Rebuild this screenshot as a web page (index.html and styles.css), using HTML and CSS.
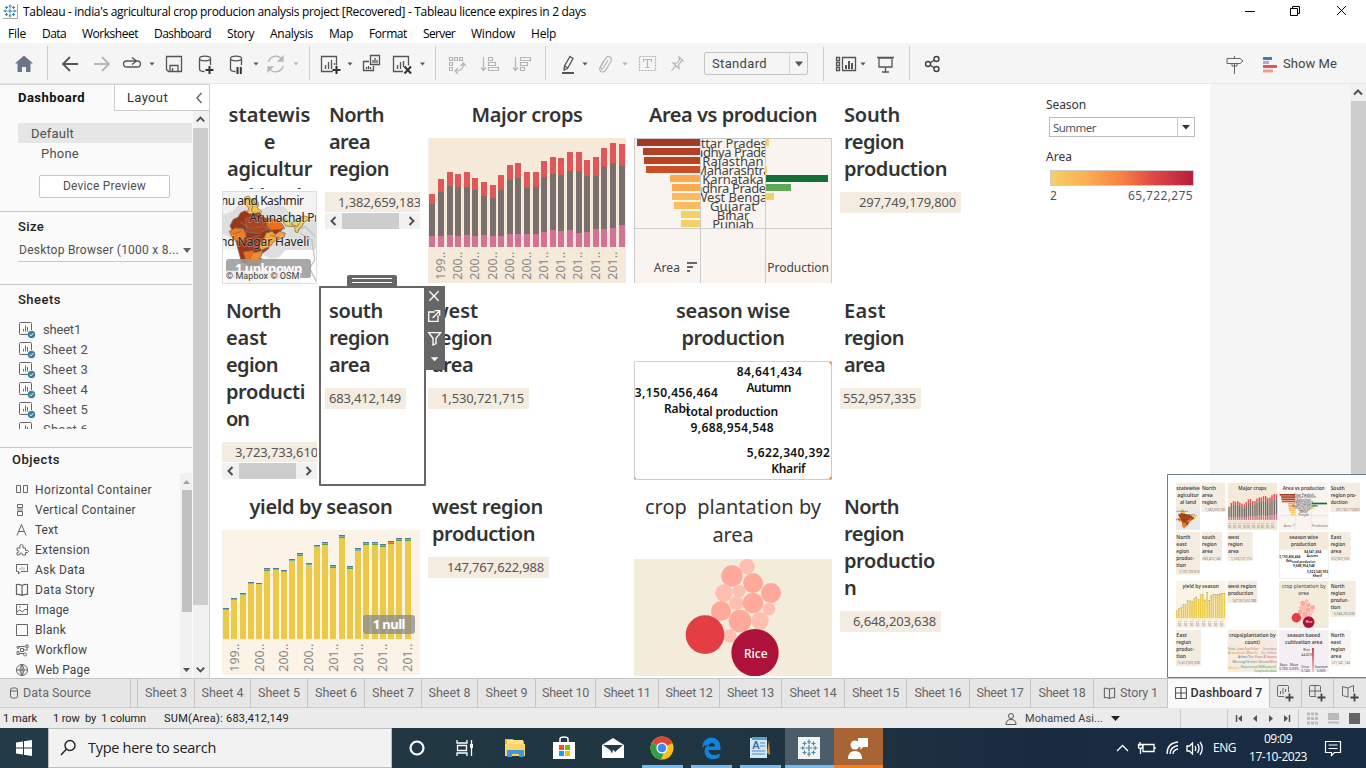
FILE: index.html
```html
<!DOCTYPE html>
<html lang="en">
<head>
<meta charset="utf-8">
<title>Tableau - Dashboard 7</title>
<link rel="stylesheet" href="styles.css">
</head>
<body>
<svg class="defs" width="0" height="0">
  <defs>
    <symbol id="flake" viewBox="0 0 16 16"><path d="M8 5v6M5 8h6M8 .5v4M6.500 2.500h3M8 11.500v4M6.500 13.500h3M.5 8h4M2.500 6.500v3M11.500 8h4M13.500 6.500v3M4 2.200v3.600M2.200 4h3.600M12 2.200v3.600M10.200 4h3.600M4 10.200v3.600M2.200 12h3.600M12 10.200v3.600M10.200 12h3.600" fill="none" stroke="currentColor" stroke-width="1.100"/></symbol>
    <symbol id="sheet" viewBox="0 0 17 17"><path d="M9 12.500H1.500q-1 0-1-1v-10q0-1 1-1h10q1 0 1 1V8M4.500 9.500V7M6.500 9.500V3.500M8.500 9.500V5" fill="none" stroke="#666"/><circle cx="12.500" cy="12.500" r="3.700" fill="#3a7fa3"/><path d="M10.800 12.500l1.300 1.300 2.200-2.600" fill="none" stroke="#fff"/></symbol>
    <symbol id="book" viewBox="0 0 14 14"><path d="M7 2.500Q4 .8 1.500 1.500v10Q4 11 7 12.500Q10 11 12.500 11.500v-10Q10 .8 7 2.500zM7 2.500v10" fill="none" stroke="#666" stroke-width="1.200"/></symbol>
    <symbol id="grid" viewBox="0 0 12 12"><path d="M1.500.5h9q1 0 1 1v9q0 1-1 1h-9q-1 0-1-1v-9q0-1 1-1zM6 .5v11M.5 6h11" fill="none" stroke="#555" stroke-width="1.200"/></symbol>
    <symbol id="chevL" viewBox="0 0 16 16"><path d="M10 4L6 8l4 4" fill="none" stroke="#505050" stroke-width="2"/></symbol>
    <symbol id="chevR" viewBox="0 0 16 16"><path d="M6 4l4 4-4 4" fill="none" stroke="#505050" stroke-width="2"/></symbol>
    <symbol id="chevU" viewBox="0 0 16 16"><path d="M4 10l4-4 4 4" fill="none" stroke="#505050" stroke-width="2"/></symbol>
    <symbol id="chevD" viewBox="0 0 16 16"><path d="M4 6l4 4 4-4" fill="none" stroke="#505050" stroke-width="2"/></symbol>
  </defs>
</svg>

<header class="titlebar">
  <svg class="app-icon" width="15" height="15"><use href="#flake"/></svg>
  <span data-w="563">Tableau - india's agricultural crop producion analysis project [Recovered] - Tableau licence expires in 2 days</span>
  <svg class="winctl" width="126" height="22" viewBox="1240 1 126 22"><path d="M1245 11.500h10M1290.500 8.500h7v7h-7zM1292.500 8V6.500h7v7h-2M1337 6l9 9M1346 6l-9 9" fill="none" stroke="#000"/></svg>
</header>
<nav class="menubar">
  <span data-w="18">File</span><span data-w="24">Data</span><span data-w="56">Worksheet</span><span data-w="57">Dashboard</span><span data-w="27">Story</span><span data-w="43">Analysis</span><span data-w="24">Map</span><span data-w="38">Format</span><span data-w="32">Server</span><span data-w="44">Window</span><span data-w="25">Help</span>
</nav>

<div class="toolbar">
  <svg class="sec" width="48" height="40" viewBox="0 43.500 48 40"><path d="M24 56l9 8h-2.500v8.500h-4.500v-5h-4v5h-4.500V64H15z" fill="#6b7785"/></svg>
  <svg class="sec" width="262" height="40" viewBox="48 43 262 40">
    <g fill="none" stroke="#555" stroke-width="1.300">
      <path d="M78 64H63M70 57l-7 7 7 7" stroke-width="1.800"/>
      <path d="M94 64h15M102 57l7 7-7 7" stroke="#b5b5b5" stroke-width="1.800"/>
      <path d="M134 61h-7q-3.500 0-3.500 3t3.500 3h10q3.500 0 3.500-3t-3.500-3h-3M132 57.500l4.500 3.500-4.500 3.500"/>
      <path d="M166.500 56.500h15v15h-13l-2-2zM170 71v-5.500h8V71M172.500 71v-3"/>
      <path d="M199.500 59v10q0 2.500 5 2.500M210.500 59v6"/><ellipse cx="205" cy="58.500" rx="5.500" ry="2.300"/>
      <path d="M209.500 66v8M205.500 70h8" stroke="#333" stroke-width="2"/>
      <path d="M230.500 59v10q0 2.500 5 2.500M241.500 59v6"/><ellipse cx="236" cy="58.500" rx="5.500" ry="2.300"/>
      <path d="M237.500 67v7M240.800 67v7" stroke="#333" stroke-width="2"/>
      <g stroke="#b5b5b5"><path d="M268.500 62a7.500 7.500 0 0 1 13.500-2.500M283 66a7.500 7.500 0 0 1-13.500 2.500"/><path d="M283 56.500v4.500h-4.500zM268 71.500v-4.500h4.500z" fill="#b5b5b5"/></g>
    </g>
    <path d="M149.500 62.500h5l-2.500 3zM253.500 62.500h5l-2.500 3z" fill="#555"/><path d="M293.500 62.500h5l-2.500 3z" fill="#b5b5b5"/>
  </svg>
  <svg class="sec" width="126" height="40" viewBox="310 43 126 40">
    <g fill="none" stroke="#555" stroke-width="1.300">
      <path d="M333 71.500h-11.500v-15h15v9M325.500 69v-4M328.500 69v-7M331.500 69v-9M334.500 65v-2"/>
      <path d="M336.500 66v8M332.500 70h8" stroke="#333" stroke-width="2"/>
      <path d="M370.500 55.500h9v9h-9zM373 63v-3M375 63v-5M377 63v-3M369 61.500h-5.500v9h10V66M366.500 69v-2M368.500 69v-3M370.500 69v-2"/>
      <path d="M403 71.500h-9.500v-15h15v9M397.500 69v-4M400.500 69v-7M403.500 67v-6"/>
      <path d="M404.500 66.500l6.500 7M411 66.500l-6.500 7" stroke="#333" stroke-width="2"/>
    </g>
    <path d="M347.500 62.500h5l-2.500 3zM420 62.500h5l-2.500 3z" fill="#555"/>
  </svg>
  <svg class="sec" width="110" height="40" viewBox="436 43 110 40">
    <g fill="none" stroke="#b5b5b5" stroke-width="1.200">
      <path d="M449.500 57.500h3v3h-3zM454.500 57.500h3v3h-3zM459.500 57.500h3v3h-3zM449.500 62.500h3v3h-3zM449.500 67.500h3v3h-3zM456 71q7 0 7.500-7M460.500 66l3-3 2.500 3M458 68l-3 3 3 3"/>
      <path d="M483.500 57v13M481 67.500l2.500 3 2.500-3M488.500 57.500h4v3h-4zM488.500 62.500h7v3h-7zM488.500 67.500h10v3h-10z"/>
      <path d="M515.500 57v13M513 67.500l2.500 3 2.500-3M520.500 57.500h10v3h-10zM520.500 62.500h7v3h-7zM520.500 67.500h4v3h-4z"/>
    </g>
  </svg>
  <svg width="158" height="40" viewBox="546 43 158 40">
    <g fill="none" stroke="#555" stroke-width="1.300"><path d="M570 56.500l3 2-5.500 10-3.500 1.500.5-4zM565 66l2.500 2" /><path d="M562 73h12" stroke-width="2"/></g>
    <g fill="none" stroke="#b5b5b5" stroke-width="1.200"><path d="M608 60l-4.500 8q-1.500 2-2.500.5-.5-1 .5-3l4-7q2-3 4.500-1.500 2.500 2 .5 5l-4.500 8q-2.500 3-5 1.500-2.500-2-.5-5l3-5.500"/><path d="M639.500 56.500h16v14h-16z" stroke-dasharray="2 1"/><path d="M643.500 62v-2.500h8V62M647.500 59.500v8M645.500 67.500h4"/><path d="M679 57l4 4-2 .5-2.500 3.500.5 3.500-6-5.500h4l2.500-3.500zM675.500 65.500l-4 5.500"/></g>
    <path d="M582.500 62.500h5l-2.500 3z" fill="#555"/><path d="M622.500 62.500h5l-2.500 3z" fill="#b5b5b5"/>
  </svg>
  <div class="combo"><span data-w="55">Standard</span><svg width="18" height="21"><path d="M5 8.500h8l-4 5z" fill="#555"/></svg></div>
  <svg class="sec after-combo" width="87" height="40" viewBox="823 43 87 40">
    <path d="M823.500 47v34" stroke="#ccc"/><path d="M836.500 57.500h3v3h-3zM836.500 62.500h3v3h-3zM836.500 67.500h3v3h-3zM842.500 57.500h13v13h-13zM879 58h13v9h-13zM877 57.500h17M885.500 67v5M882 72h7" fill="none" stroke="#555" stroke-width="1.300"/><path d="M846 69v-4M849 69v-8M852 69v-6" stroke="#555" stroke-width="2"/><path d="M860.500 62.500h5l-2.500 3z" fill="#555"/>
  </svg>
  <svg width="56" height="40" viewBox="910 43 56 40"><g fill="none" stroke="#444" stroke-width="1.400"><circle cx="928" cy="64" r="2.500"/><circle cx="936.500" cy="59" r="2.500"/><circle cx="936.500" cy="69" r="2.500"/><path d="M930 63l4.500-3M930 65l4.500 3"/></g></svg>
  <div class="showme">
    <svg width="54" height="40" viewBox="1226 43 54 40"><path d="M1227 57.500h13l3 2.500-3 2.500h-13zM1234.500 55v2M1234.500 63v10M1232 62.500v2.500h5v-2.500" fill="none" stroke="#666"/><path d="M1263 57.500h9" stroke="#4a78b5" stroke-width="3"/><path d="M1263 61.500h6" stroke="#bba3cf" stroke-width="3"/><path d="M1263 65.500h14" stroke="#e15759" stroke-width="3"/><path d="M1263 70h10" stroke="#f0a08a" stroke-width="3"/></svg>
    <span data-w="54">Show Me</span>
  </div>
</div>

<main class="work">
  <aside class="side">
    <div class="side-tabs"><b data-w="67">Dashboard</b><span class="lay"><span data-w="41">Layout</span><svg width="8" height="12"><path d="M6.500 1L2 6l4.500 5" fill="none" stroke="#666" stroke-width="1.400"/></svg></span></div>
    <div class="side-row">
      <div class="side-main">
        <section class="devices">
          <div class="default"><span data-w="43">Default</span></div>
          <div class="phone"><span data-w="38">Phone</span></div>
          <div class="preview"><span data-w="83">Device Preview</span></div>
        </section>
        <section class="size">
          <h3 data-w="26">Size</h3>
          <div class="size-pick"><span data-w="160">Desktop Browser (1000 x 8...</span><svg width="8" height="5"><path d="M0 0h8l-4 5z" fill="#666"/></svg></div>
        </section>
        <section class="sheets">
          <h3 data-w="43">Sheets</h3>
          <ul id="sheet-list"></ul>
        </section>
        <section class="objects">
          <h3 data-w="48">Objects</h3>
          <div class="obj-row">
            <ul>
              <li><svg width="14" height="14"><path d="M1.500 2.500h4v7h-4zM8.500 2.500h4v7h-4z"/></svg><span data-w="117">Horizontal Container</span></li>
              <li><svg width="14" height="14"><path d="M2.500 1.500h5v3h-5zM2.500 8.500h5v4h-5z"/><path d="M2 5h6v3H2z" fill="#bbb" stroke="none"/></svg><span data-w="101">Vertical Container</span></li>
              <li><svg width="14" height="14"><path d="M2 12.500L6.500 1.500 11 12.500M3.800 8.500h5.500"/></svg><span data-w="23">Text</span></li>
              <li><svg width="14" height="14"><path d="M2 5h3q-1-3.500 1.500-3.500T8 5h2.500v2.500q3-.5 3 1t-3 1V12h-3q0-2-1.500-2t-1.500 2H2V9.500q2 0 2-1t-2-1z"/></svg><span data-w="55">Extension</span></li>
              <li><svg width="14" height="14"><path d="M1.500 1.500h11v7H6L3.500 11V8.500h-2z"/><path d="M5 7V5M7 7V3.500M9 7V4.500" stroke="#aaa"/></svg><span data-w="50">Ask Data</span></li>
              <li><svg width="14" height="14"><use href="#book"/></svg><span data-w="60">Data Story</span></li>
              <li><svg width="14" height="14"><path d="M1.500 1.500h11v10h-11zM2 9l2.500-2 3 2 2-2.500h2.500M4 4h1.500"/></svg><span data-w="34">Image</span></li>
              <li><svg width="14" height="14"><path d="M1.500 1.500h11v11h-11z"/></svg><span data-w="31">Blank</span></li>
              <li><svg width="14" height="14"><path d="M4 3.500h6M4 10.500h5M3 3.500a1 1 0 1 0 .1 0M11 2h2v3h-2zM5.500 5.500h3v3h-3zM2 8.500h2v3H2zM10 10a1.500 1.500 0 1 0 .1 0M9 7h4"/></svg><span data-w="52">Workflow</span></li>
              <li><svg width="14" height="14"><circle cx="7" cy="7" r="5.500"/><path d="M1.500 7h11M7 1.500v11M7 1.500q-4 5.500 0 11M7 1.500q4 5.500 0 11"/></svg><span data-w="55">Web Page</span></li>
            </ul>
            <div class="mini-scroll"><svg width="12" height="17"><path d="M3 11l3.500-4 3.500 4z" fill="#a3a3a3"/></svg><i></i><svg class="dn" width="12" height="17"><path d="M3 7h7l-3.500 4z" fill="#505050"/></svg></div>
          </div>
        </section>
      </div>
      <div class="vscroll"><svg width="15" height="17"><use href="#chevU"/></svg><i></i><svg class="dn" width="15" height="17"><use href="#chevD"/></svg></div>
    </div>
  </aside>

  <div class="stage">
    <div class="board">
      <article class="tile"><h2 class="c clip"><span data-w="82">statewis</span><br>e<br><span data-w="85">agicultur</span><br>al land</h2>
        <svg class="map" width="95" height="93" viewBox="30 303 285 279">
          <path fill="#f3f3f3" d="M30 303h285v279H30z"/><path d="M30 375l30-10 20-20 60 15 60-20 70 50 45-5v90l-50 20-90 10L30 430z" fill="#dedede"/><path d="M30 480h60l30 60h50l50-60h95v102H30z" fill="#fff"/>
          <path d="M265 430l35 20 8 60-15 25 20 40M260 420l20-10 30 30" fill="none" stroke="#c4c4c4" stroke-width="4"/>
          <g stroke="#7d7466" stroke-width="2.500" stroke-linejoin="round">
            <path d="M98 322l12-4 10 12 10-6 10 16-4 14 12 10-4 14-26 6-12-16 4-14-14-14z" fill="#f6c04f"/>
            <path d="M112 340l10 8-4 14 12 10M124 328l4 16 12 4" fill="none"/>
            <path d="M64 388l14-6 8-14 14-6 12 10 30-4 18 16 16 2 16 12 16 8 4 12-26 20-10 8-6 30-16 12-24 6-18 30-24-8-6-24-8-30-8-30-12-24z" fill="#9d3619"/>
            <path d="M100 385l30-5 24 14 20 4-6 20-30 12-34-4z" fill="#ad421c"/>
            <path d="M52 424l18-10 24 2 8 16-4 14-16 8-14-4-10-12z" fill="#f07c22"/>
            <path d="M168 384l30 6 14 14 6 12-40 4-14-12z" fill="#ef6e1d"/>
            <path d="M94 486l30-4 8 18 18 6-10 18-14 18-14-12-10-18z" fill="#ef6e1d"/>
            <path d="M138 470l14-14 10-26 18-6 10 10 14-10 16 6-4 12-30 12-10 14-26 12z" fill="#f8a335"/>
            <path d="M120 490l32-8-4 16-22 24-14-10z" fill="#f58a2c"/>
            <path d="M206 386l18 4 16 10 12-10 22-12 12 2 4 8-14 8-6 14-8 4-4 14-8-2-2-16-26-2z" fill="#f2cc5c"/>
            <path d="M84 396l30 20 36-6M95 450l50-14M150 380l4 30 26 14M110 470l40-14M236 402l20 8 8-14M176 436l26 6M64 432l24-8" fill="none"/>
          </g>
          <g class="map-lbl"><text x="-6" y="346" textLength="282">nmu and Kashmir</text><text x="112" y="396" textLength="210">Arunachal Pr</text><text x="4" y="469" textLength="288">and Nagar Haveli</text></g>
          <rect x="42" y="507" width="255" height="57" rx="9" fill="#999" opacity=".85"/><text x="69" y="548" textLength="202" class="unk">1 unknown</text>
          <path d="M40 542h225v40H40z" fill="#f7f7f7" opacity=".85"/><text x="42" y="566" textLength="220" class="osm">© Mapbox © OSM</text>
          <path d="M31.500 304.500h282v276h-282z" fill="none" stroke="#ddd" stroke-width="3"/>
        </svg></article>
      <article class="tile"><h2><span data-w="55">North</span><br><span data-w="41">area</span><br><span data-w="60">region</span></h2><div class="val clipped"><span data-w="83">1,382,659,183</span></div><div class="hscroll"><svg width="17" height="16"><use href="#chevL"/></svg><i></i><svg width="17" height="16"><use href="#chevR"/></svg></div></article>
      <article class="tile w2"><h2 class="c"><span data-w="111">Major crops</span></h2><svg id="crops" width="198" height="145" viewBox="12 144 594 435"></svg></article>
      <article class="tile w2"><h2 class="c"><span data-w="168">Area vs producion</span></h2><svg id="avp" width="198" height="145" viewBox="12 144 594 435"></svg></article>
      <article class="tile w2"><h2><span data-w="56">South</span><br><span data-w="60">region</span><br><span data-w="103">production</span></h2><div class="val" style="width:121px"><span data-w="97">297,749,179,800</span></div></article>

      <article class="tile"><h2><span data-w="55">North</span><br><span data-w="41">east</span><br><span data-w="52">egion</span><br><span data-w="79">producti</span><br><span data-w="23">on</span></h2><div class="val clipped"><span data-w="83">3,723,733,610</span></div><div class="hscroll"><svg width="17" height="16"><use href="#chevL"/></svg><i></i><svg width="17" height="16"><use href="#chevR"/></svg></div></article>
      <article class="tile"><h2><span data-w="54">south</span><br><span data-w="60">region</span><br><span data-w="41">area</span></h2><div class="val" style="width:81px"><span data-w="72">683,412,149</span></div></article>
      <article class="tile w2"><h2><span data-w="46">west</span><br><span data-w="60">region</span><br><span data-w="41">area</span></h2><div class="val" style="width:101px"><span data-w="83">1,530,721,715</span></div></article>
      <article class="tile w2"><h2 class="c"><span data-w="114">season wise</span><br><span data-w="103">production</span></h2>
        <svg width="198" height="119" viewBox="12 33 594 357"><path d="M13.500 34.500h591v354h-591z" fill="#fff" stroke="#ccc" stroke-width="3"/><path d="M596 36h9v9zM605 377v10h-10z" fill="#f28e2b"/><path d="M13 33h592" stroke="#f2dfc0" stroke-width="2"/><path d="M14 379l5 8h-5z" fill="#76b7b2"/>
          <g class="season"><text x="418" y="78" textLength="195">84,641,434</text><text x="417" y="126" textLength="135">Autumn</text><text x="139" y="141" textLength="249">3,150,456,464</text><text x="140" y="190" textLength="76">Rabi</text><text x="306" y="198" textLength="277">total production</text><text x="306" y="246" textLength="249">9,688,954,548</text><text x="475" y="321" textLength="249">5,622,340,392</text><text x="475" y="369" textLength="103">Kharif</text></g></svg></article>
      <article class="tile w2"><h2><span data-w="42">East</span><br><span data-w="60">region</span><br><span data-w="41">area</span></h2><div class="val" style="width:81px"><span data-w="73">552,957,335</span></div></article>

      <article class="tile w2"><h2 class="c"><span data-w="143">yield by season</span></h2><svg id="yield" width="198" height="145" viewBox="30 120 594 435"></svg></article>
      <article class="tile w2"><h2><span data-w="111">west region</span><br><span data-w="103">production</span></h2><div class="val" style="width:121px"><span data-w="97">147,767,622,988</span></div></article>
      <article class="tile w2"><h2 class="c reg"><span data-w="176">crop&nbsp; plantation by</span><br><span data-w="41">area</span></h2>
        <svg id="bubbles" width="198" height="117" viewBox="12 627 594 351"></svg></article>
      <article class="tile w2"><h2><span data-w="55">North</span><br><span data-w="60">region</span><br><span data-w="91">productio</span><br><span data-w="12">n</span></h2><div class="val" style="width:101px"><span data-w="83">6,648,203,638</span></div></article>

      <div class="legend">
        <label data-w="40">Season</label>
        <div class="season-pick"><span data-w="43">Summer</span><svg width="17" height="18"><path d="M4 7h8l-4 4.500z" fill="#333"/></svg></div>
        <label class="a" data-w="26">Area</label>
        <div class="ramp"></div>
        <div class="ends"><span>2</span><span data-w="65">65,722,275</span></div>
      </div>

      <div class="pick">
        <svg class="grip" width="50" height="12"><path d="M2 0h46q2 0 2 2v10H0V2q0-2 2-2z" fill="#666"/><path d="M5 3.500h40M5 7.500h40" stroke="#fff"/></svg>
        <svg class="tools" width="21" height="84" viewBox="636 48 63 252"><path d="M636 48h63v252h-63z" fill="#666"/><path d="M652 64l28 28M680 64l-28 28M668 126h-18v28h28v-18M662 144l20-20M668 122h15v15M650 188h36l-14 17v16l-9 4v-20z" fill="none" stroke="#fff" stroke-width="4"/><path d="M656 262h23l-11 12z" fill="#fff"/></svg>
      </div>
    </div>
    <div class="beyond"></div>
    <div class="vscroll page"><svg width="16" height="17"><use href="#chevU"/></svg><i></i></div>
    <svg id="mini" class="mini" width="199" height="204" viewBox="21 12 597 612"></svg>
  </div>
</main>

<div class="tabs" id="tabs"></div>

<footer class="status">
  <span class="s1" data-w="34">1 mark</span><span class="s2" data-w="93">1 row&nbsp; by&nbsp; 1 column</span><span class="s3" data-w="125">SUM(Area): 683,412,149</span>
  <svg class="user" width="14" height="14"><circle cx="7" cy="4" r="2.500" fill="none" stroke="#555"/><path d="M2 12.500q0-5 5-5t5 5z" fill="none" stroke="#555"/></svg><span class="uname" data-w="78">Mohamed Asi...</span>
  <svg class="nav" width="256" height="20" viewBox="1110 708 256 20"><path d="M1111 715h9l-4.500 5z" fill="#222"/><path d="M1180.500 708v20M1227.500 708v20M1298.500 708v20" stroke="#ccc"/><path d="M1236.500 714v7M1289.500 714v7" stroke="#555" stroke-width="1.500"/><path d="M1242 714v7l-4-3.500zM1257 714v7l-4-3.500zM1269 714v7l4-3.500zM1284 714v7l4-3.500z" fill="#555"/><path d="M1307 713h11M1307 717.500h11M1307 722h11" stroke="#bbb" stroke-width="3" stroke-dasharray="3 1"/><path d="M1328 712h11v7h-11zM1328 720.500h11v2h-11z" fill="#bbb"/><path d="M1349 712h11v11h-11z" fill="#666"/></svg>
</footer>

<div class="taskbar">
  <div class="start"><svg width="16" height="16"><path d="M0 2.500l7-1V7.500H0zM8 1.300L16 0v7.500H8zM0 8.500h7v6l-7-1zM8 8.500h8V16l-8-1.200z" fill="#fff"/></svg></div>
  <div class="search"><svg width="18" height="18"><circle cx="11" cy="6.500" r="5" fill="none" stroke="#222" stroke-width="1.400"/><path d="M7.500 10L2 16" stroke="#222" stroke-width="1.400"/></svg><span data-w="128">Type here to search</span></div>
  <div class="app"><svg width="24" height="24"><circle cx="12" cy="12" r="6.500" fill="none" stroke="#fff" stroke-width="2.200"/></svg></div>
  <div class="app"><svg width="24" height="24"><path d="M3 4v3h10V4M3 20v-3h10v3M3.500 9.500h9v5h-9zM17.500 4v16" fill="none" stroke="#fff" stroke-width="1.300"/><path d="M16 8h3v4h-3z" fill="#fff"/></svg></div>
  <div class="app"><svg width="24" height="24"><path d="M2 3h8l1.500 2H21v15H2z" fill="#f0b93a"/><path d="M4 4h16v5H4z" fill="#ffe08a"/><path d="M2 8h20v12H2z" fill="#fcd462"/><path d="M4 21v-7h17v7h-5v-3H9v3z" fill="#3f98dc"/></svg></div>
  <div class="app"><svg width="24" height="24"><path d="M1 6h22v17H1z" fill="#fff"/><path d="M8 6V3q0-2 4-2t4 2v3" fill="none" stroke="#fff" stroke-width="1.500"/><path d="M7 9h5v5H7z" fill="#f25022"/><path d="M13 9h5v5h-5z" fill="#7fba00"/><path d="M7 15h5v5H7z" fill="#00a4ef"/><path d="M13 15h5v5h-5z" fill="#ffb900"/></svg></div>
  <div class="app"><svg width="24" height="24"><path d="M1 9L12 2l11 7v13H1z" fill="#fff"/><path d="M2 9h20l-8 7-2-2.500-1 4-2-3.500z" fill="#233b48"/></svg></div>
  <div class="app run"><svg width="24" height="24"><circle cx="12" cy="12" r="11.500" fill="#fbc116"/><path d="M12 12L2 6.500A11.500 11.500 0 0 1 22.500 7z" fill="#df4535"/><path d="M2 6.200A11.500 11.500 0 0 0 11 23.500L14.500 15z" fill="#2da04f"/><circle cx="12" cy="12" r="5.600" fill="#fff"/><circle cx="12" cy="12" r="4.300" fill="#4285f4"/></svg></div>
  <div class="app run"><svg width="24" height="24"><path d="M3 12Q4 1.500 12.500 1.500 21 2 21.500 11v3H9.500q.5 5 6 5 3 0 5-1.500v4q-3 2-7 1.800Q5.500 22.500 5.500 15q.5-5 4.500-6.500-5 .5-7 3.500zM9.500 10.500H16q-.3-3.500-3-3.500-3 .2-3.500 3.500z" fill="#1283dc" fill-rule="evenodd"/></svg></div>
  <div class="app run"><svg width="24" height="24"><path d="M2 2h17v20H2z" fill="#cfe8f8"/><path d="M4 1h15v3H4z" fill="#5b9fd0"/><text x="4" y="13" font-size="11" font-weight="700" fill="#3978aa" font-family="Liberation Sans">A</text><path d="M12 7h5M12 10h5M4 15h13M4 18h13" stroke="#5c87a5"/><path d="M21 4l1 15-3-2" fill="#e08b38"/></svg></div>
  <div class="app run on"><svg width="24" height="24"><path d="M1 1h22v22H1z" fill="#f2f2f2"/><use href="#flake" x="3" y="3" width="18" height="18" color="#4e87a8"/></svg></div>
  <div class="app warn"><svg width="24" height="24"><circle cx="9" cy="9" r="4.500" fill="#fff"/><path d="M2 23q0-8 7-8t7 8z" fill="#fff"/><path d="M12 2h10v9h-5l-2.500 3v-3H12z" fill="#fff"/></svg></div>
  <svg class="tray" width="90" height="24" viewBox="1114 736 90 24"><g fill="none" stroke="#fff" stroke-width="1.300"><path d="M1117 751l5.500-5.500 5.500 5.500M1143 744.500h11v7h-11zM1155 747v2M1140 742v4M1138.500 744.500h4v3q-2 2-4 0zM1140.500 749v5"/><path d="M1167 754q0-11 11-12M1170 754q0-7 8-8.500M1173 754q0-4 5-5" /><path d="M1187 746h2.500l3-3v11l-3-3h-2.500zM1195 746q1.500 2.500 0 5M1197.500 744q3 4 0 9M1200 742q4.500 6 0 13"/></g></svg>
  <span class="lang" data-w="23">ENG</span>
  <div class="clock"><span data-w="28">09:09</span><span data-w="58">17-10-2023</span></div>
  <svg class="note" width="20" height="20"><path d="M2.500 3.500h15v11h-6l-3 3v-3h-6zM5.500 7h9M5.500 10.500h9" fill="none" stroke="#fff" stroke-width="1.200"/></svg>
</div>
<script src="app.js"></script>
</body>
</html>
```

FILE: styles.css
```css
* { box-sizing: border-box; }
body { margin: 0; width: 1366px; height: 768px; overflow: hidden; display: flex; flex-direction: column; background: #fff; font: 12px/16px "Open Sans", sans-serif; color: #000; }
h2, h3, ul { margin: 0; padding: 0; list-style: none; }
svg { display: block; flex: none; }
span, h3, b, label { white-space: nowrap; }
.defs { position: absolute; }

.titlebar { height: 23px; display: flex; align-items: center; padding-left: 3px; }
.app-icon { color: #2d7fae; border-right: 1px solid #aaa; border-bottom: 1px solid #aaa; margin-right: 5px; }
.winctl { margin-left: auto; }
.menubar { height: 20px; display: flex; align-items: center; gap: 16px; padding: 2px 0 0 8px; }

.toolbar { height: 41px; background: #f5f5f5; border-bottom: 1px solid #e6e6e6; display: flex; align-items: center; font: 13px/18px Roboto, sans-serif; color: #444; }
.sec { background: linear-gradient(#ccc, #ccc) right 3px / 1px 34px no-repeat; }
.combo { width: 104px; height: 23px; margin-top: 1px; border: 1px solid #c4c4c4; border-radius: 2px; display: flex; justify-content: space-between; align-items: center; padding-left: 7px; }
.combo svg { border-left: 1px solid #d4d4d4; }
.after-combo { margin-left: 15px; }
.showme { margin-left: auto; display: flex; align-items: center; gap: 3px; padding: 1px 29px 0 0; }

.work { height: 594px; display: flex; }
.side { width: 210px; background: #fafafa; border-right: 1px solid #d0d0d0; display: flex; flex-direction: column; font-family: Roboto, sans-serif; color: #505050; }
.side-tabs { height: 27px; display: flex; font-size: 13px; line-height: 26px; border-top: 1px solid #d4d4d4; }
.side-tabs b { color: #111; padding-left: 18px; width: 114px; font-weight: 700; }
.lay { flex: 1; border-left: 1px solid #ccc; border-bottom: 1px solid #ccc; background: #fff; padding: 0 6px 0 12px; display: flex; justify-content: space-between; align-items: center; line-height: 25px; color: #333; }
.side-row { flex: 1; min-height: 0; display: flex; }
.side-main { width: 193px; padding-right: 1px; display: flex; flex-direction: column; }
.vscroll { width: 16px; background: #f1f1f1; display: flex; flex-direction: column; }
.vscroll i { height: 477px; background: #cdcdcd; }
.side .vscroll i { width: 15px; }
.dn { margin-top: auto; }
.devices { height: 101px; padding: 12px 0 0 18px; border-bottom: 1px solid #c8c8c8; font-size: 13px; line-height: 21px; }
.default { background: #e6e6e6; height: 20px; padding-left: 13px; }
.phone { padding-left: 23px; height: 20px; }
.preview { margin: 12px 22px 0 21px; height: 23px; border: 1px solid #c6c6c6; border-radius: 2px; background: #fff; text-align: center; font-size: 12px; line-height: 21px; }
.side h3 { font-size: 13px; line-height: 18px; font-weight: 500; color: #222; align-self: flex-start; width: max-content; }
.size { height: 73px; padding: 6px 0 0 18px; border-bottom: 1px solid #c8c8c8; }
.size-pick { border-bottom: 1px solid #c8c8c8; height: 24px; margin-top: 2px; padding: 1px 1px 0; display: flex; align-items: center; justify-content: space-between; }
.sheets { height: 163px; padding: 6px 0 0 18px; border-bottom: 1px solid #c8c8c8; }
.sheets ul { margin-top: 10px; height: 110px; overflow: hidden; font-size: 13px; }
.sheets li { height: 20px; display: flex; align-items: center; gap: 7px; padding: 2px 0 0 1px; }
.objects { flex: 1; min-height: 0; padding: 3px 0 0 12px; }
.obj-row { display: flex; justify-content: space-between; margin-top: 4px; height: 205px; overflow: hidden; }
.obj-row ul { padding-top: 7px; font-size: 12px; color: #444; }
.obj-row li { height: 20px; display: flex; align-items: center; gap: 6px; padding-left: 3px; }
.obj-row li svg { fill: none; stroke: #666; }
.mini-scroll { width: 12px; background: #f1f1f1; display: flex; flex-direction: column; }
.mini-scroll i { height: 122px; margin-left: 2px; background: #c1c1c1; }

.stage { flex: 1; position: relative; display: flex; overflow: hidden; }
.board { width: 1000px; position: relative; padding: 8px 0 0 8px; display: grid; grid-template-columns: repeat(10, 103px); grid-auto-rows: 196px; font-family: "Noto Sans", sans-serif; }
.beyond { width: 140px; background: #f5f5f5; }
.page { background: #f1f1f1; }
.page i { margin-left: 1px; height: 560px; }
.tile { padding: 4px; display: flex; flex-direction: column; min-width: 0; overflow: hidden; }
.w2 { grid-column-end: span 2; }
.tile:nth-child(5) { grid-column: 7 / span 2; }
.tile:nth-child(6), .tile:nth-child(11) { grid-column-start: 1; }
.tile h2 { margin: 5px 0 10px; padding-left: 4px; font-size: 20px; line-height: 27px; font-weight: 600; color: #333; white-space: nowrap; }
.tile h2.c { text-align: center; padding: 0; }
.tile h2.reg { font-weight: 400; line-height: 28px; }
.tile h2.clip { height: 88px; overflow: hidden; margin-bottom: 2px; flex: none; }
.val { height: 21px; background: #f5ece1; font-size: 13px; line-height: 21px; color: #555; text-align: right; padding-right: 5px; flex: none; }
.val.clipped { height: 20px; text-align: left; padding: 0 0 0 13px; overflow: hidden; }
.hscroll { display: flex; height: 16px; background: #f1f1f1; margin-top: 1px; flex: none; }
.hscroll i { width: 57px; background: #cdcdcd; }
.hscroll svg:last-child { margin-left: auto; }
.map-lbl { font-size: 36px; fill: #222; stroke: #fff; stroke-width: 4px; stroke-opacity: .35; paint-order: stroke; }
.unk { font-size: 39px; font-weight: 700; fill: #fff; }
.osm { font: 27px Roboto, sans-serif; fill: #444; }
.season { font: 600 36px "Noto Sans", sans-serif; text-anchor: middle; fill: #111; }
.axis { font: 37px "Noto Sans", sans-serif; fill: #888; }
.state { font: 39px "Noto Sans", sans-serif; fill: #444; text-anchor: middle; }
.head { font: 36px "Noto Sans", sans-serif; fill: #444; }

.legend { position: absolute; left: 836px; top: 12px; width: 150px; color: #333; font-size: 12px; display: flex; flex-direction: column; align-items: flex-start; line-height: 17px; }
.season-pick { margin: 4px 0 0 3px; width: 146px; height: 20px; border: 1px solid #bbb; display: flex; align-items: center; justify-content: space-between; padding-left: 3px; color: #555; font-size: 11.500px; }
.season-pick svg { border-left: 1px solid #ccc; }
.legend .a { margin-top: 11px; }
.ramp { margin: 5px 0 0 4px; width: 144px; height: 16px; background: linear-gradient(90deg, #f4d166, #fcae51 25%, #f98043 50%, #e04747 72%, #b71d3e); border: 1px solid #ccc; }
.ends { margin: 1px 0 0 4px; width: 143px; display: flex; justify-content: space-between; color: #555; }

.pick { position: absolute; left: 109px; top: 202px; width: 107px; height: 200px; border: 2px solid #666; border-radius: 1px; }
.grip { position: absolute; left: 26px; top: -13px; }
.tools { position: absolute; left: 103px; top: -2px; }
.mini { position: absolute; right: 0; bottom: 0; background: #fff; }
.mini text { font: 600 17.500px "Noto Sans", sans-serif; fill: #444; }
.mini .num { font-size: 10.500px; font-weight: 400; fill: #777; }
.mini .m { text-anchor: middle; }

.tabs { height: 30px; background: #e6e6e6; border-top: 1px solid #c4c4c4; display: flex; font: 12.500px/28px Roboto, sans-serif; color: #666; }
.tab { border-right: 1px solid #c4c4c4; border-bottom: 1px solid #cfcfcf; display: flex; align-items: center; justify-content: center; gap: 4px; flex: none; }
.tab.active { background: #fafafa; color: #333; font-weight: 500; border-bottom-color: #fafafa; }

.status { height: 20px; background: #ebebeb; display: flex; align-items: center; font: 11px/18px Roboto, sans-serif; color: #222; padding: 1px 0 0 3px; }
.s2 { margin-left: 16px; }
.s3 { margin-left: 18px; }
.user { margin-left: 715px; }
.uname { margin-left: 7px; color: #444; }
.nav { margin-left: auto; }

.taskbar { height: 40px; background: linear-gradient(90deg, #223b46, #1f3440 60%, #1a2b40 75%, #182c44); display: flex; align-items: center; color: #fff; }
.start { width: 48px; padding-left: 16px; }
.search { width: 344px; height: 40px; background: #f2f2f2; border: 1px solid #b9bdbf; display: flex; align-items: center; padding-left: 10px; gap: 11px; color: #222; font-size: 14.500px; }
.app { width: 49.100px; height: 40px; display: flex; align-items: center; justify-content: center; border-bottom: 3px solid transparent; border-top: 3px solid transparent; }
.run { border-bottom: 0; background: linear-gradient(#76b9ed, #76b9ed) center bottom / 41px 3px no-repeat; padding-bottom: 3px; }
.run.on { background-color: #4c5d69; background-size: 100% 3px; }
.warn { background: #a86432; border-top-color: #a86432; border-bottom-color: #f28022; }
.tray { margin-left: auto; }
.lang { margin-left: 9px; }
.clock { margin-left: 12px; width: 60px; display: flex; flex-direction: column; align-items: center; line-height: 18px; }
.note { margin: 0 23px 0 15px; }
```

FILE: app.js
```js
const $ = (id) => document.getElementById(id);
const rect = (x, y, w, h, f) => `<rect x="${x}" y="${y}" width="${w}" height="${h}" fill="${f}"/>`;

// Sheets list
$('sheet-list').innerHTML = ['sheet1', 'Sheet 2', 'Sheet 3', 'Sheet 4', 'Sheet 5', 'Sheet 6']
  .map((n, i) => `<li><svg width="17" height="17"><use href="#sheet"/></svg><span data-w="${i ? 45 : 38}">${n}</span></li>`).join('');

// Bottom tabs
const names = ['Sheet 3', 'Sheet 4', 'Sheet 5', 'Sheet 6', 'Sheet 7', 'Sheet 8', 'Sheet 9', 'Sheet 10', 'Sheet 11', 'Sheet 12', 'Sheet 13', 'Sheet 14', 'Sheet 15', 'Sheet 16', 'Sheet 17', 'Sheet 18'];
const edges = [138, 195, 251, 308, 365, 422, 478, 536, 596, 659, 720, 782, 845, 907, 970, 1031, 1094];
const add = (icon) => `<svg width="19" height="18" viewBox="0 0 19 18" fill="none" stroke="#666">${icon}<path d="M13.500 9.500v8M9.500 13.500h8" stroke="#444" stroke-width="1.800"/></svg>`;
$('tabs').innerHTML =
  `<div class="tab" style="width:131px;justify-content:flex-start;padding-left:9px"><svg width="10" height="12" fill="none" stroke="#666"><rect x="1.500" y="1" width="7" height="10" rx="2"/><path d="M2 4h6"/></svg><span data-w="68">Data Source</span></div><div class="tab" style="width:7px"></div>` +
  names.map((n, i) => `<div class="tab" style="width:${edges[i + 1] - edges[i]}px"><span data-w="${n.length > 7 ? 47 : 42}">${n}</span></div>`).join('') +
  `<div class="tab" style="width:74px"><svg width="13" height="13"><use href="#book"/></svg><span data-w="38">Story 1</span></div>` +
  `<div class="tab active" style="width:102px"><svg width="12" height="12"><use href="#grid"/></svg><span data-w="72">Dashboard 7</span></div>` +
  `<div class="tab" style="width:32px">${add('<path d="M8 12.500H2.500q-1 0-1-1v-9q0-1 1-1h9q1 0 1 1V8M4.500 10V7M7 10V4M9.500 8V5"/>')}</div>` +
  `<div class="tab" style="width:32px">${add('<path d="M8 12.500H2.500q-1 0-1-1v-9q0-1 1-1h9q1 0 1 1V8M7 1.500v11M1.500 7H12"/>')}</div>` +
  `<div class="tab" style="width:33px">${add('<path d="M8 12.500L6.500 13 1.500 11.500v-9L7 4l5.500-2.500V8M7 4v8.500"/>')}</div>`;

// Major crops: stacked bars
const cx = [15, 42, 69, 93, 120, 144, 171, 198, 222, 249, 273, 300, 327, 351, 378, 402, 429, 456, 480, 507, 531, 558, 585];
const red = [312, 267, 246, 252, 246, 264, 276, 285, 255, 225, 219, 246, 246, 213, 201, 204, 186, 186, 210, 201, 174, 159, 162];
const gray = [342, 306, 288, 291, 291, 300, 318, 324, 300, 270, 264, 294, 291, 261, 252, 255, 243, 243, 258, 258, 231, 219, 228];
const pink = [438, 438, 435, 438, 435, 438, 435, 438, 438, 432, 432, 432, 432, 426, 420, 423, 420, 429, 426, 417, 417, 414, 405];
const axis = (xs, y) => xs.map(([x, t]) => `<text class="axis" transform="translate(${x + 13} ${y}) rotate(-90)" textLength="84">${t}</text>`).join('');
const cropBars = cx.map((x, i) => rect(x, red[i], 18, gray[i] - red[i], '#e15759') + rect(x, gray[i], 18, pink[i] - gray[i], '#79706e') + rect(x, pink[i], 18, 471 - pink[i], '#d37295')).join('');
$('crops').innerHTML = rect(12, 144, 594, 435, '#f5ead9') + rect(12, 144, 3, 327, '#f0f0f0') + rect(12, 471, 594, 3, '#f0f0f0') +
  cropBars + cx.filter((_, i) => i % 2 === 0).map((x) => rect(x - 3, 474, 3, 9, '#eee')).join('') +
  axis([[50, '199..'], [102, '200..'], [153, '200..'], [205, '200..'], [256, '200..'], [307, '200..'], [359, '201..'], [411, '201..'], [462, '201..'], [514, '201..'], [565, '201..']], 569);

// Area vs production
const left = [[21, '#a33a28'], [39, '#b53f23'], [42, '#b84323'], [48, '#ca4f24'], [120, '#fda94f'], [126, '#fda94f'], [126, '#f9bb5b'], [132, '#f9bd5e'], [153, '#f4d166'], [153, '#f4d166']];
const states = [['Uttar Pradesh', 250], ['Madhya Pradesh', 290], ['Rajasthan', 184], ['Maharashtra', 226], ['Karnataka', 184], ['Andhra Pradesh', 280], ['West Bengal', 226], ['Gujarat', 138], ['Bihar', 98], ['Punjab', 124]];
const funnel = left.map(([x, c], i) => rect(x, 147 + 27 * i, 210 - x, 21, c)).join('');
const prod = rect(408, 147, 9, 21, '#f4d166') + rect(408, 228, 3, 21, '#f4d166') + rect(408, 255, 186, 21, '#146f37') + rect(408, 282, 75, 21, '#5fa856') + rect(408, 309, 24, 21, '#f4d166');
$('avp').innerHTML = '<clipPath id="mid"><rect x="213" y="146" width="192" height="268"/></clipPath>' + rect(12, 144, 594, 435, '#faf4f0') + funnel + prod +
  `<g clip-path="url(#mid)">${states.map(([s, w], i) => `<text class="state" x="309" y="${175 + 27 * i}" textLength="${w}">${s}</text>`).join('')}</g>` +
  '<path d="M13.500 579V145.500h591V579M12 415.500h594M211.500 144v435M406.500 144v435" fill="none" stroke="#ccc" stroke-width="3"/>' +
  '<text class="head" x="71" y="546" textLength="79">Area</text><text class="head" x="412" y="546" textLength="185">Production</text>' +
  '<path d="M171 519h30M171 531h18M171 543h9" stroke="#666" stroke-width="6"/>';

// Yield by season
const yx = [33, 57, 84, 108, 132, 156, 183, 207, 231, 255, 282, 306, 330, 354, 381, 405, 429, 453, 480, 504, 528, 552, 579];
const yt = [354, 324, 309, 276, 279, 234, 234, 240, 207, 189, 219, 165, 156, 225, 135, 228, 174, 156, 156, 162, 153, 144, 144];
const caps = (x, y, i) => rect(x, y, 18, 3, '#4e79a7') + ([16, 20, 21].includes(i) ? rect(x, y + 3, 18, 3, '#f28e2b') : '') +
  (i === 4 ? '' : rect(x, y + ([16, 20, 21].includes(i) ? 6 : 3), 18, 3, '#76b7b2')) + ([5, 9].includes(i) || i > 11 ? rect(x, y + 6, 18, 3, i === 16 ? '#76b7b2' : '#59a14f') : '');
const yieldBars = yx.map((x, i) => rect(x, yt[i] + 3, 18, 444 - yt[i], '#edc948') + caps(x, yt[i], i)).join('');
$('yield').innerHTML = rect(30, 120, 594, 435, '#faf3e6') + rect(30, 120, 3, 327, '#f0f0f0') + rect(30, 447, 594, 3, '#f0f0f0') + yieldBars +
  axis([[67, '199..'], [142, '200..'], [214, '200..'], [289, '200..'], [364, '201..'], [439, '201..'], [511, '201..'], [586, '201..']], 545) +
  '<rect x="453" y="375" width="156" height="57" rx="9" fill="#8d8d8d" opacity=".78"/><text class="unk" x="482" y="417" textLength="98">1 null</text>';

// Bubbles
const dots = [[351, 650, 23, 0], [306, 678, 32, 1], [369, 699, 30, 1], [282, 729, 26, 0], [327, 723, 19, 0], [423, 729, 30, 1], [319, 759, 21, 0], [369, 759, 31, 1], [417, 777, 19, 0], [273, 783, 30, 1], [330, 813, 34, 1], [390, 813, 26, 0], [300, 858, 20, 0]];
const bub = dots.map(([x, y, r, d]) => `<circle cx="${x}" cy="${y}" r="${r}" fill="${d ? '#ffa99b' : '#ffbeb2'}"/>`).join('') +
  '<circle cx="225" cy="854" r="58" fill="#e33e43"/><circle cx="375" cy="908" r="71" fill="#ae123a"/>';
$('bubbles').innerHTML = rect(12, 627, 594, 351, '#f4ecda') + bub + '<text x="342" y="924" textLength="71" font-size="36" font-weight="500" fill="#fff">Rice</text>';

// Overview popup
const blocks = [[48, 38, 72, 142], [125, 38, 71, 88], [203, 38, 149, 142, '#f5ead9'], [357, 38, 149, 142, '#faf4f0'], [511, 38, 89, 88], [48, 186, 72, 128], [125, 186, 61, 87], [203, 186, 75, 87], [357, 186, 149, 53, '#f5ead9'], [511, 186, 61, 87], [48, 333, 149, 141, '#faf3e6'], [203, 333, 89, 66], [357, 333, 149, 141, '#f4ecda'], [511, 333, 76, 108], [48, 480, 75, 108], [203, 480, 149, 126], [357, 480, 149, 126, '#f5eff5'], [511, 480, 61, 108, '#faf4f0']];
const words = [[84, 61, 'statewise|agicultur|al land', 1], [126, 61, 'North|area|region'], [277, 61, 'Major crops', 1], [431, 61, 'Area vs producion', 1], [512, 61, 'South|region pro-|duction'], [49, 208, 'North|east|egion|produc-|tion'], [126, 208, 'south|region|area'], [204, 208, 'west|region|area'], [431, 208, 'season wise|production', 1], [512, 208, 'East|region|area'], [122, 355, 'yield by season', 1], [204, 355, 'west region|production'], [431, 355, 'crop plantation by|area', 2], [512, 355, 'North|region|produc-|tion'], [49, 502, 'East|region|produc-|tion'], [277, 502, 'crops(plantation by|count)', 1], [431, 502, 'season based|cultivation area', 1], [512, 502, 'North|east|region|area']];
const widths = { 'Major crops': 84, 'Area vs producion': 126, 'season wise': 86, 'yield by season': 109, 'crop plantation by': 132, 'crops(plantation by': 140, 'season based': 98, 'cultivation area': 112, 'region pro-': 77, 'west region': 84, production: 76, statewise: 71, agicultur: 64, North: 42, region: 44, 'produc-': 54, duction: 51, tion: 29, egion: 38, south: 40, South: 42, west: 34, East: 32, east: 31, area: 32, 'al land': 48, 'count)': 45 };
const nums = [[135, 122, '1,382,659,183', 62], [527, 122, '297,749,179,800', 72], [57, 310, '3,723,733,610', 62], [128, 269, '683,412,149', 54], [213, 269, '1,530,721,715', 63], [513, 269, '552,957,335', 55], [217, 395, '147,767,622,988', 72], [522, 436, '6,648,203,638', 62], [51, 583, '13,412,923,978', 68], [514, 583, '121,341,746', 57]];
const smallFunnel = left.map(([x, c], i) => rect(359 + (x - 21) * .25, 72 + i * 6.600, 47 - (x - 21) * .25, 5, c)).join('');
$('mini').innerHTML = blocks.map((b) => rect(b[0], b[1], b[2], b[3], b[4] || '#f5ece1')).join('') +
  words.map(([x, y, t, m]) => t.split('|').map((s, i) => `<text x="${x}" y="${y + 20.500 * i}" ${m ? 'class="m"' : ''} ${m === 2 ? 'style="font-weight:400"' : ''} textLength="${widths[s]}" lengthAdjust="spacingAndGlyphs">${s}</text>`).join('')).join('') +
  nums.map(([x, y, t, w]) => `<text class="num" x="${x}" y="${y}" textLength="${w}" lengthAdjust="spacingAndGlyphs">${t}</text>`).join('') +
  `<g transform="translate(201 32) scale(.25)">${cropBars}</g>` +
  `<g transform="translate(40 333) scale(.26 .25)">${yieldBars}</g>` +
  [212, 229, 244, 257, 271, 285, 299, 313, 327, 342].map((x) => `<text class="num" transform="translate(${x} 176) rotate(-90)">201..</text>`).join('') +
  [62, 81, 99, 118, 136, 154, 172, 190].map((x) => `<text class="num" transform="translate(${x} 470) rotate(-90)">201..</text>`).join('') +
  smallFunnel + states.map(([s], i) => `<text class="num m" style="font-size:9px;font-weight:600" x="431" y="${79 + 6.400 * i}">${s}</text>`).join('') +
  rect(455, 98, 46, 5, '#146f37') + rect(455, 105, 18, 5, '#5fa856') + rect(455, 112, 6, 5, '#f4d166') + '<path d="M358 136.500h147M406.500 70v110M455 70v110" stroke="#d5d0cc"/>' +
  '<text class="num" x="371" y="171">Area ⊤</text><text class="num" x="456" y="171" textLength="48">Production</text>' +
  rect(48, 112, 71, 66, '#e9e9e9') + '<path d="M62 120l8-3 6 12-4 8-8-5z" fill="#f6c04f"/><path d="M54 134l10-5 14 3 14 4 9 4 2 6-12 6-8 14-8 4-8-10-6-14z" fill="#a6441f"/><path d="M52 144l10 0 4 7-8 4zM66 158l12 0 2 8-8 10-6-8zM80 152l12-7 6 3-14 10z" fill="#ef7a26"/><path d="M96 138l12-4 4 4-8 8z" fill="#f2cc5c"/><path d="M50 124h34M72 134h34M48 149h48" stroke="#444" stroke-width="3" stroke-dasharray="3 2" opacity=".7"/>' +
  rect(357, 239, 149, 87, '#fff') + '<rect x="358" y="240" width="147" height="86" fill="none" stroke="#d3d3d3"/>' +
  [[433, 249, '84,641,434', 50], [440, 261, 'Autumn', 34], [358, 265, '3,150,456,464', 63], [378, 277, 'Rabi', 18], [396, 279, 'total production', 70], [399, 291, '9,688,954,548', 65], [441, 308, '5,622,340,392', 63], [458, 321, 'Kharif', 28]].map(([x, y, t, w]) => `<text x="${x}" y="${y}" textLength="${w}" lengthAdjust="spacingAndGlyphs" style="font-size:10px;fill:#111">${t}</text>`).join('') +
  `<g transform="translate(354 234) scale(.245)">${bub}</g>` + '<text class="num" x="437" y="459" style="fill:#fff">Rice</text>' +
  [[203, 540, 'Potato', '#59a14f', 24], [232, 541, 'Jowar Guar Pulses', '#e15759', 64], [308, 540, 'Groundnut', '#b07aa1', 42], [204, 551, 'Arecanut (Black)', '#f28e2b', 90], [303, 552, 'Dry chillies', '#d37295', 46], [234, 565, 'Arhar/Tur', '#4e79a7', 48], [285, 563, 'Peas & beans', '#e15759', 65], [217, 580, 'Moong(Green Gram)', '#499894', 112], [331, 578, 'Wheat', '#e15759', 19], [204, 597, 'Maize', '#edc948', 34], [242, 594, 'Rapeseed &Mustard', '#59a14f', 105], [282, 607, 'Cowpea(Lobia)', '#59a14f', 68]].map(([x, y, t, c, w]) => `<text x="${x}" y="${y}" textLength="${w}" lengthAdjust="spacingAndGlyphs" style="font-size:11px;font-weight:400;fill:${c}">${t}</text>`).join('') +
  '<linearGradient id="rg" x2="0" y2="1"><stop stop-color="#cc4650"/><stop offset="1" stop-color="#f0cfc0"/></linearGradient>' + rect(456, 534, 6, 72, 'url(#rg)') +
  [[430, 544, 'Rice', 20], [424, 557, '44.82%', 33], [359, 587, 'Bajra', 23], [390, 587, 'Maize', 25], [358, 601, '0.16%', 26], [388, 601, '0.09%', 28], [424, 594, 'Onion', 24], [424, 606, '0.14%', 26], [464, 594, 'Sesamum', 39], [470, 606, '5.06%', 27]].map(([x, y, t, w]) => `<text class="num" style="fill:#333" x="${x}" y="${y}" textLength="${w}" lengthAdjust="spacingAndGlyphs">${t}</text>`).join('') +
  '<path d="M618 13.500H22.500v609H618" fill="none" stroke="#6c7d8c" stroke-width="3"/>';

// Track each label so that it fills its nominal width
for (const el of document.querySelectorAll('[data-w]')) {
  const range = document.createRange();
  range.selectNodeContents(el);
  const natural = range.getBoundingClientRect().width;
  el.style.letterSpacing = `${(el.dataset.w - natural) / el.textContent.length}px`;
}
```
